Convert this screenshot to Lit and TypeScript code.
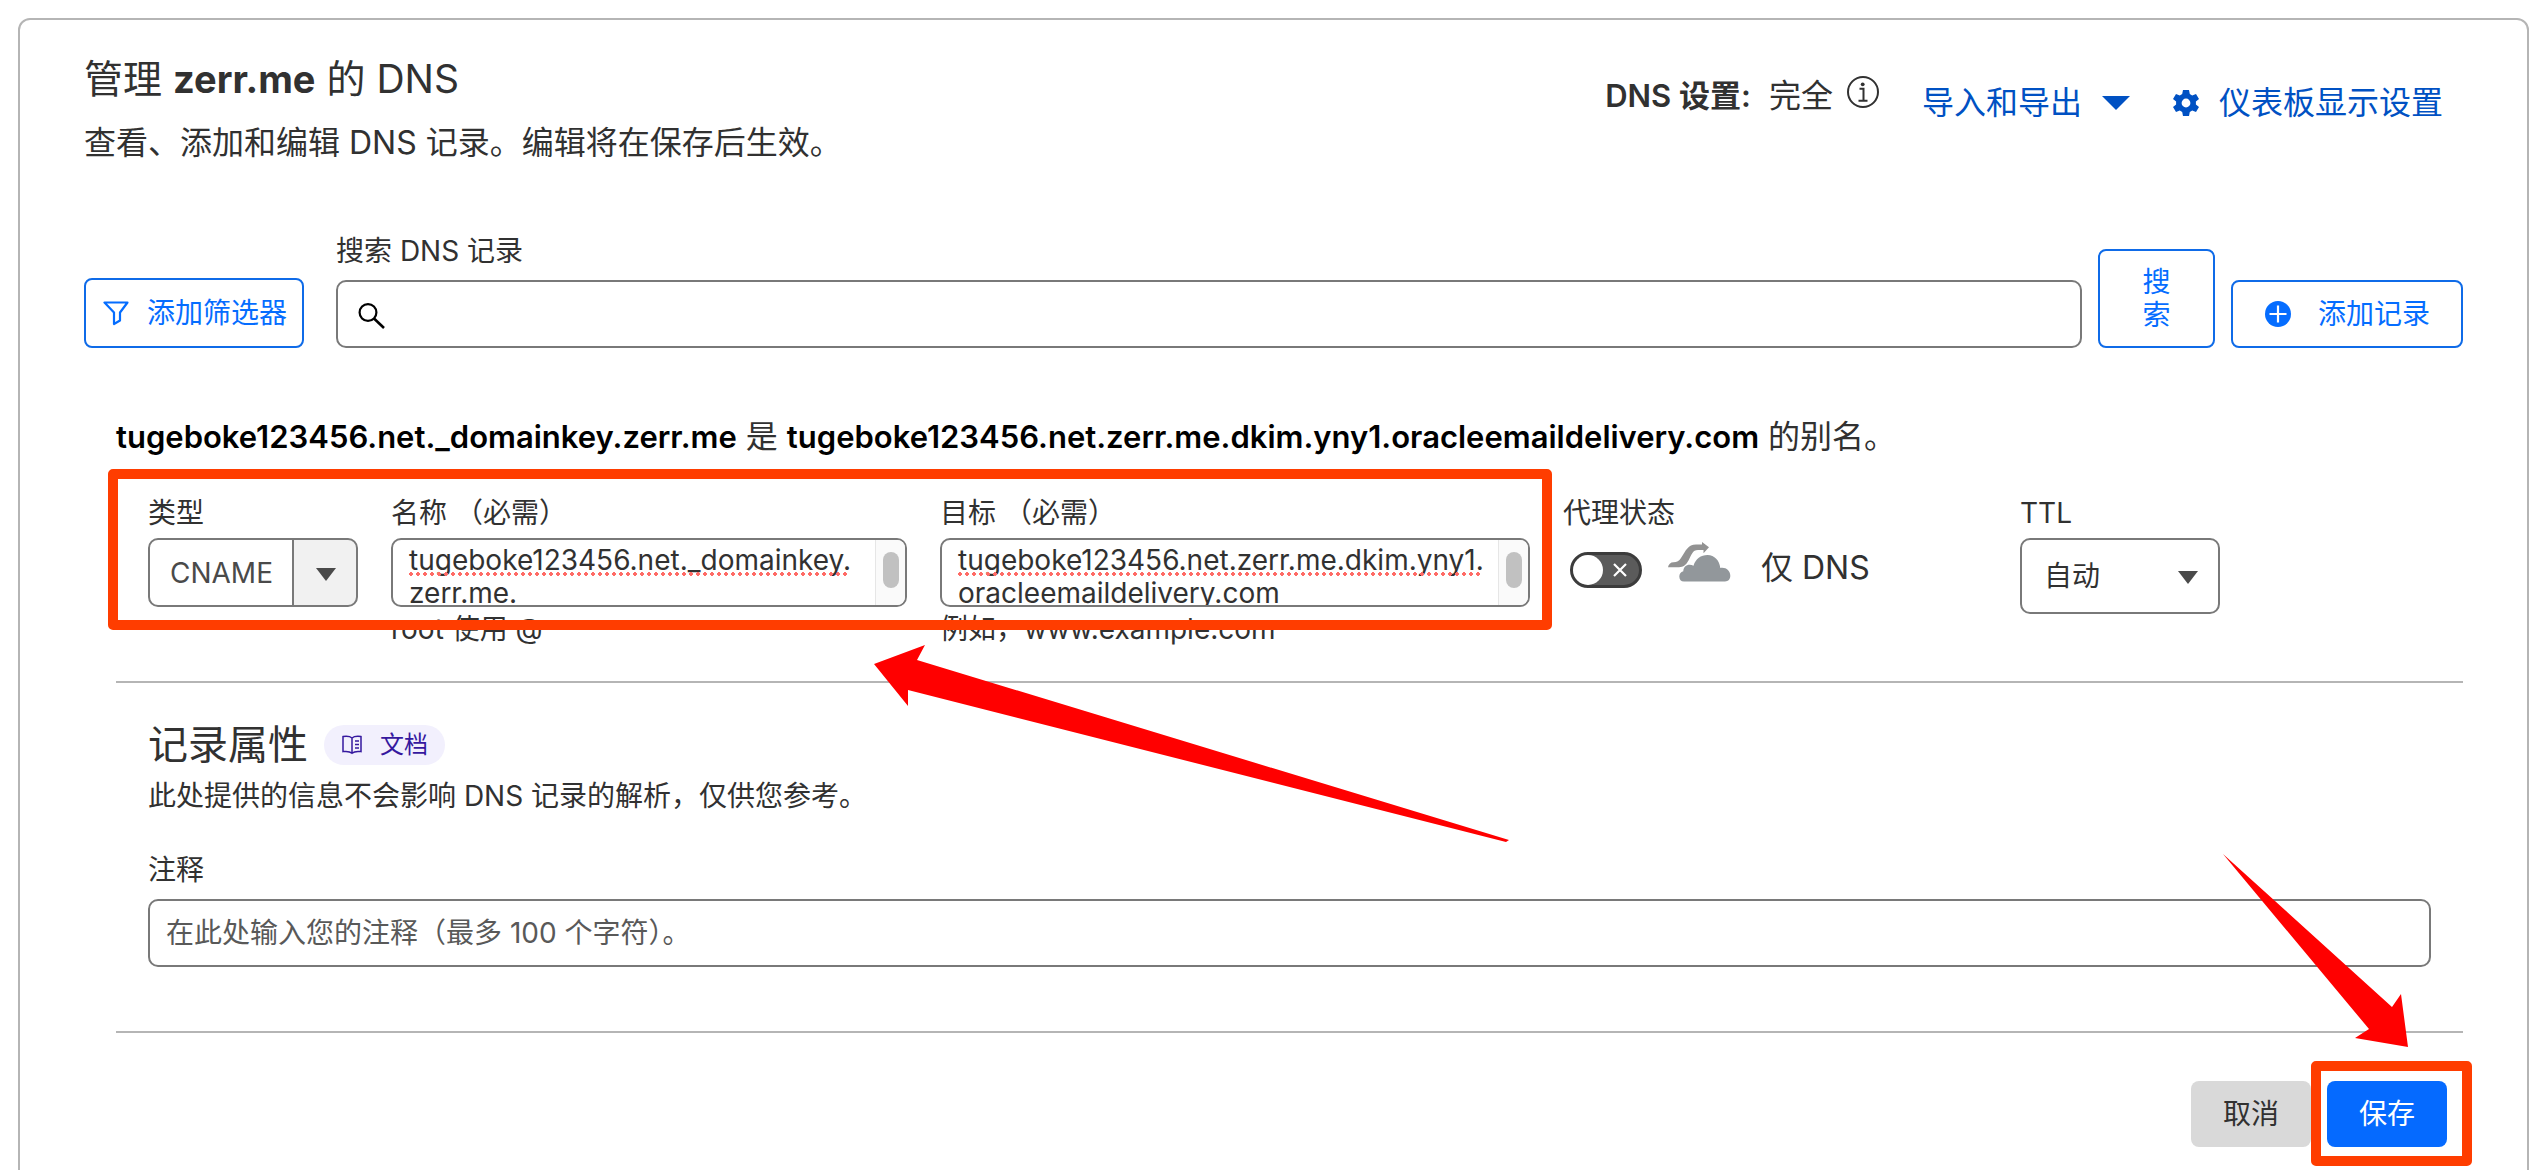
import { LitElement, html, css, svg } from "lit";
import { customElement, property, state } from "lit/decorators.js";

const icons = {
  funnel: svg`<path d="M1.500 2.500h23l-7.500 10v8l-6 3.500V12.500z" fill="none" stroke="currentColor" stroke-width="2.200" stroke-linejoin="round"/>`,
  search: svg`<circle cx="10" cy="9.500" r="8.400" fill="none" stroke="currentColor" stroke-width="2.200"/><path d="M16 15.500 26 25" fill="none" stroke="currentColor" stroke-width="2.600"/>`,
  plus: svg`<circle cx="13" cy="13" r="13" fill="currentColor"/><path d="M13 4.500v17M4.500 13h17" stroke="#fff" stroke-width="2.2"/>`,
  info: svg`<circle cx="16" cy="16" r="15" fill="none" stroke="currentColor" stroke-width="2"/><circle cx="15.700" cy="8.300" r="1.900" fill="currentColor"/><path d="M12.500 12.800h4v11M11.500 24.800h9" fill="none" stroke="currentColor" stroke-width="2"/>`,
  caret: svg`<path d="M0 0h28L14 14z" fill="currentColor"/>`,
  gear: svg`<path fill-rule="evenodd" fill="currentColor" d="M10 0h6l.8 4 2.400 1.400 3.800-1.500 3 5.200-3.100 2.500v2.800l3.100 2.500-3 5.200-3.800-1.500-2.400 1.400-.8 4h-6l-.8-4-2.400-1.400L3 22.100l-3-5.200 3.100-2.500v-2.800L0 9.100l3-5.200 3.800 1.500L9.200 4zM13 8.600a4.400 4.400 0 1 0 0 8.800 4.400 4.400 0 0 0 0-8.800z"/>`,
  cloud: svg`<path fill="#92979b" d="M16 39.500c-3 0-4.700-2-4.700-5 0-2.600 1.300-4.500 4-5.200-.2-5.500 5.500-8.300 10.200-5.600C27.500 17 33 13 39.500 13 46.500 13 51.500 18.500 52.300 26c5.200-1.200 10 2.500 10 7.800 0 3.500-2 5.700-5.300 5.700z"/><path fill="#929292" d="M0 25.200c.5-3 2.500-5 5.500-5 3.500 0 5.500-1.200 7.500-4.200C18 8.500 20 2.600 28 2.600h6V0l7 5.200-5.500 6V8h-5.500C24.500 8 23.500 13 20.500 18.500 18 23 15.500 25.200 11 25.200z"/>`,
  book: svg`<path d="M10 3C8 1.300 4 1.200 1 1.600v15c3-.4 7-.2 9 1.600 2-1.800 6-2 9-1.600v-15C16 1.200 12 1.300 10 3zM10 3v15M13 6h4M13 9.500h4M13 13h4" fill="none" stroke="currentColor" stroke-width="1.500"/>`,
  cross: svg`<path d="M1 1l12 12M13 1 1 13" stroke="currentColor" stroke-width="2.200" fill="none"/>`,
};

function icon(name: keyof typeof icons, w: number, h: number, cls = "") {
  return html`<svg class=${cls} width=${w} height=${h} viewBox="0 0 ${w} ${h}" aria-hidden="true">${icons[name]}</svg>`;
}

const base = css`
  * {
    box-sizing: border-box;
  }
  svg {
    display: block;
    flex: none;
  }
  button,
  input,
  select,
  textarea {
    font: inherit;
    color: inherit;
    margin: 0;
  }
`;

/** Multi-line value box with a persistent scroll thumb and a misspelling mark. */
@customElement("value-area")
export class ValueArea extends LitElement {
  @property() label = "";
  @property() value = "";
  @property() hint = "";
  @property({ type: Number }) mark = 0;

  static styles = [
    base,
    css`
      :host {
        display: block;
      }
      .label {
        display: block;
        margin-bottom: 7px;
      }
      .box {
        position: relative;
        height: 69px;
        border: 2px solid #797979;
        border-radius: 10px;
        overflow: hidden;
        background: #fff;
      }
      .text {
        display: block;
        width: 100%;
        height: 65px;
        padding: 4px 36px 0 16px;
        border: 0;
        outline: 0;
        resize: none;
        overflow: hidden;
        line-height: 33px;
        background: none;
      }
      .mark {
        position: absolute;
        left: 16px;
        top: 32px;
        height: 4px;
        background: radial-gradient(circle at 2px 2px, #ff6b66 2px, transparent 2px) 0 0 / 7px 4px repeat-x;
      }
      .track {
        position: absolute;
        top: 0;
        right: 0;
        bottom: 0;
        width: 30px;
        border-left: 1px solid #e6e6e6;
        background: #fafafa;
      }
      .thumb {
        width: 16px;
        height: 36px;
        margin: 12px 0 0 7px;
        border-radius: 8px;
        background: #c1c1c1;
      }
      .hint {
        margin-top: 4px;
      }
    `,
  ];

  render() {
    return html`
      <label class="label" for="v">${this.label} （必需）</label>
      <div class="box">
        <textarea class="text" id="v" spellcheck="false" .value=${this.value}></textarea>
        <div class="mark" style="width:${this.mark}px"></div>
        <div class="track"><div class="thumb"></div></div>
      </div>
      <div class="hint">${this.hint}</div>
    `;
  }
}

@customElement("app-root")
export class AppRoot extends LitElement {
  @state() private proxied = false;

  static styles = [
    base,
    css`
      :host {
        display: block;
        height: 100vh;
        overflow: hidden;
        background: #fff;
        color: #313131;
        font-family: Inter, "Noto Sans CJK SC", sans-serif;
        font-size: 28px;
        line-height: 36px;
      }
      .card {
        margin: 18px 13px 0 18px;
        padding: 35px 64px 48px;
        border: 2px solid #b5b5b5;
        border-radius: 12px;
      }
      .head {
        display: flex;
        justify-content: space-between;
        margin-bottom: 70px;
      }
      h1,
      h2,
      p {
        margin: 0;
        font-weight: 400;
      }
      h1,
      h2 {
        font-size: 40px;
        line-height: 48px;
      }
      h1 {
        font-size: 39px;
      }
      h1 b {
        font-size: 38px;
      }
      .sub {
        margin-top: 20px;
        font-size: 32px;
        line-height: 40px;
      }
      .tools {
        display: flex;
        align-items: flex-start;
        gap: 43px;
        padding: 21px 20px 0 0;
        font-size: 32px;
        line-height: 40px;
      }
      .status {
        display: flex;
        align-items: flex-start;
        gap: 14px;
      }
      .status b,
      .alias b {
        font-size: 31px;
        font-weight: 600;
      }
      .link {
        display: flex;
        align-items: center;
        gap: 20px;
        margin-top: 7px;
        padding: 0;
        border: 0;
        background: none;
        color: #0051c3;
        text-decoration: none;
      }
      .search {
        display: flex;
        align-items: flex-end;
        gap: 16px;
        margin-bottom: 69px;
      }
      .btn {
        display: flex;
        align-items: center;
        justify-content: center;
        height: 68px;
        border: 2px solid #0f6be8;
        border-radius: 8px;
        background: #fff;
        color: #056dff;
        white-space: nowrap;
      }
      .filter {
        height: 70px;
        gap: 18px;
        padding: 0 15px 0 17px;
        margin-right: 16px;
      }
      .find {
        width: 117px;
        height: 99px;
        padding: 0 42px;
        line-height: 33px;
        white-space: normal;
      }
      .add {
        gap: 27px;
        padding: 0 31px 0 32px;
      }
      .query {
        flex: 1;
      }
      .query label,
      .note label {
        display: block;
        margin-bottom: 11px;
      }
      .field {
        display: flex;
        align-items: center;
        height: 68px;
        padding: 0 16px;
        border: 2px solid #797979;
        border-radius: 10px;
        background: #fff;
      }
      .query .field {
        padding: 6px 20px 0;
        color: #000;
      }
      .field input {
        flex: 1;
        min-width: 0;
        padding: 0;
        border: 0;
        outline: 0;
        background: none;
      }
      .field input::placeholder {
        color: #595959;
        opacity: 1;
      }
      .record {
        margin-left: 32px;
      }
      .alias {
        margin-bottom: 38px;
        font-size: 32px;
        line-height: 40px;
      }
      .alias b {
        color: #000;
      }
      .row {
        display: grid;
        grid-template-columns: 1382fr 424fr 411fr;
        gap: 33px;
        padding: 0 32px 34px;
      }
      .group {
        position: relative;
        display: grid;
        grid-template-columns: 210fr 516fr 590fr;
        gap: 33px;
      }
      .label {
        display: block;
        margin-bottom: 7px;
      }
      .pick {
        position: relative;
        color: #4a4a4a;
      }
      .pick select {
        display: block;
        width: 100%;
        height: 69px;
        padding: 0 0 0 20px;
        border: 2px solid #797979;
        border-radius: 10px;
        appearance: none;
        background: linear-gradient(#797979, #797979) right 62px top / 2px 100% no-repeat,
          linear-gradient(#f1f1f1, #f1f1f1) right top / 62px 100% no-repeat, #fff;
      }
      .pick svg {
        position: absolute;
        right: 22px;
        top: calc(50% - 5px);
        pointer-events: none;
      }
      .ttl {
        width: 200px;
      }
      .ttl select {
        height: 76px;
        padding-left: 22px;
        color: #313131;
        background: #fff;
      }
      .proxy {
        display: flex;
        align-items: center;
        height: 64px;
        padding-left: 7px;
        font-size: 32px;
      }
      .proxy span {
        line-height: 40px;
      }
      .mode {
        margin-bottom: 4px;
      }
      .toggle {
        display: flex;
        align-items: center;
        justify-content: space-between;
        width: 72px;
        height: 36px;
        padding: 0 12px 0 0;
        border: 3px solid #3c3c3c;
        border-radius: 18px;
        background: #5b5b5b;
        color: #fff;
      }
      .knob {
        width: 30px;
        height: 30px;
        border-radius: 50%;
        background: #fff;
      }
      .cloud {
        margin: 0 30px 16px 26px;
      }
      .rule {
        height: 2px;
        margin: 0;
        border: 0;
        background: #b5b5b5;
      }
      .attrs {
        padding: 38px 32px 64px;
      }
      .title {
        display: flex;
        align-items: center;
        gap: 16px;
        margin-bottom: 9px;
      }
      .doc {
        display: flex;
        align-items: center;
        gap: 18px;
        height: 40px;
        padding: 0 17px 0 18px;
        border-radius: 20px;
        background: #f2f0fd;
        color: #35189f;
        font-size: 24px;
        text-decoration: none;
      }
      .note {
        margin-top: 38px;
      }
      .foot {
        display: flex;
        justify-content: flex-end;
        gap: 16px;
        padding: 48px 16px 0 0;
      }
      .foot button {
        width: 120px;
        height: 66px;
        padding: 0;
        border: 0;
        border-radius: 8px;
        background: #d9d9d9;
      }
      .foot .save {
        background: #056aff;
        color: #fff;
      }
      .anchor {
        position: relative;
      }
      .frame {
        position: absolute;
        border: 10px solid #ff3d00;
        border-radius: 5px;
        pointer-events: none;
      }
      .frame-fields {
        inset: -26px -22px 17px -40px;
      }
      .frame-save {
        inset: -20px -25px -19px -16px;
      }
      .arrow {
        position: absolute;
        fill: #f00;
        pointer-events: none;
      }
      .arrow-fields {
        left: 726px;
        top: 150px;
      }
      .arrow-save {
        right: 38px;
        top: -227px;
      }
    `,
  ];

  private flip() {
    this.proxied = !this.proxied;
  }

  render() {
    return html`
      <main class="card">
        <header class="head">
          <div>
            <h1>管理 <b>zerr.me</b> 的 DNS</h1>
            <p class="sub">查看、添加和编辑 DNS 记录。编辑将在保存后生效。</p>
          </div>
          <div class="tools">
            <div class="status"><span><b>DNS 设置:</b>&nbsp; 完全</span>${icon("info", 32, 32)}</div>
            <button class="link" type="button">导入和导出 ${icon("caret", 28, 14)}</button>
            <a class="link" href="#settings">${icon("gear", 26, 26)} 仪表板显示设置</a>
          </div>
        </header>

        <form class="search" @submit=${(e: Event) => e.preventDefault()}>
          <button class="btn filter" type="button">${icon("funnel", 26, 26)} 添加筛选器</button>
          <div class="query">
            <label for="q">搜索 DNS 记录</label>
            <div class="field">${icon("search", 28, 28)}<input id="q" type="text" /></div>
          </div>
          <button class="btn find" type="submit">搜索</button>
          <button class="btn add" type="button">${icon("plus", 26, 26)} 添加记录</button>
        </form>

        <section class="record">
          <p class="alias">
            <b>tugeboke123456.net._domainkey.zerr.me</b> 是
            <b>tugeboke123456.net.zerr.me.dkim.yny1.oracleemaildelivery.com</b> 的别名。
          </p>
          <div class="row">
            <div class="group">
              <div>
                <label class="label" for="type">类型</label>
                <div class="pick">
                  <select id="type"><option>CNAME</option></select>
                  <svg width="20" height="13" viewBox="0 0 28 14" preserveAspectRatio="none">${icons.caret}</svg>
                </div>
              </div>
              <value-area
                label="名称"
                .value=${"tugeboke123456.net._domainkey.\nzerr.me."}
                hint="root 使用 @"
                .mark=${440}
              ></value-area>
              <value-area
                label="目标"
                .value=${"tugeboke123456.net.zerr.me.dkim.yny1.\noracleemaildelivery.com"}
                hint="例如，www.example.com"
                .mark=${524}
              ></value-area>
              <div class="frame frame-fields"></div>
              <svg class="arrow arrow-fields" width="636" height="200" viewBox="0 0 636 200">
                <path d="M0 19 51 0 43 15 635 195 632 197 34 45V61z" />
              </svg>
            </div>
            <div>
              <label class="label" for="proxy">代理状态</label>
              <div class="proxy">
                <button id="proxy" class="toggle" type="button" role="switch" aria-checked=${this.proxied} @click=${this.flip}>
                  <span class="knob"></span>${icon("cross", 14, 14)}
                </button>
                ${icon("cloud", 63, 40, "cloud")}
                <span class="mode">仅 DNS</span>
              </div>
            </div>
            <div>
              <label class="label" for="ttl">TTL</label>
              <div class="pick ttl">
                <select id="ttl"><option>自动</option></select>
                <svg width="20" height="13" viewBox="0 0 28 14" preserveAspectRatio="none">${icons.caret}</svg>
              </div>
            </div>
          </div>
          <hr class="rule" />
          <div class="attrs">
            <div class="title">
              <h2>记录属性</h2>
              <a class="doc" href="#docs">${icon("book", 20, 20)} 文档</a>
            </div>
            <p>此处提供的信息不会影响 DNS 记录的解析，仅供您参考。</p>
            <div class="note">
              <label for="note">注释</label>
              <div class="field"><input id="note" type="text" maxlength="100" placeholder="在此处输入您的注释（最多 100 个字符）。" /></div>
            </div>
          </div>
          <hr class="rule" />
          <div class="foot">
            <button type="button">取消</button>
            <div class="anchor">
              <button class="save" type="button">保存</button>
              <div class="frame frame-save"></div>
              <svg class="arrow arrow-save" width="187" height="194" viewBox="0 0 187 194">
                <path d="M1 0 170 153 179 140 186 193 133 184 147 175z" />
              </svg>
            </div>
          </div>
        </section>
      </main>
    `;
  }
}
